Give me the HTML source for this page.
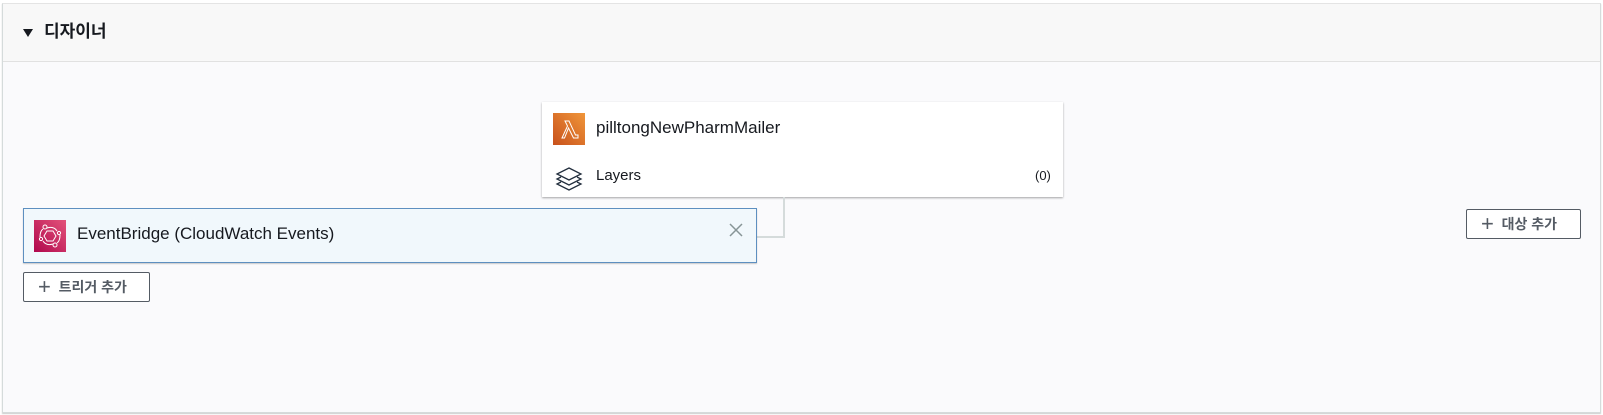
<!DOCTYPE html>
<html><head><meta charset="utf-8"><style>
*{box-sizing:border-box;margin:0;padding:0}
body{width:1603px;height:415px;background:#fff;font-family:"Liberation Sans","Noto Sans CJK KR",sans-serif;color:#16191f;position:relative;overflow:hidden}
.panel{position:absolute;left:2px;top:3px;width:1599px;height:410px;border:1px solid #d5dbdb;border-top-color:#e4e4e4;background:#fafafc;box-shadow:0 1px 1px rgba(0,0,0,.2)}
.hdr{position:absolute;left:0;top:0;right:0;height:58px;background:#f8f8f8;border-bottom:1px solid #e1e1e1}
.tri{position:absolute;left:20px;top:25px;width:0;height:0;border-left:5.5px solid transparent;border-right:5.5px solid transparent;border-top:8px solid #16191f}
.ttl{position:absolute;left:41px;top:17px;font-size:17px;font-weight:bold;line-height:22px}
.abs{position:absolute}
.card{left:539px;top:98px;width:521px;height:95px;background:#fff;box-shadow:0 1px 2px rgba(0,0,0,.35)}
.eb{left:20px;top:204px;width:734px;height:55px;background:#f1f8fc;border:1px solid #5d8fc0;box-shadow:0 1px 1px rgba(0,0,0,.2)}
.btn{background:#fff;border:1px solid #545b64;border-radius:2px;font-size:14px;font-weight:bold;color:#545b64;line-height:28px}
</style></head><body>
<div class="panel">
 <div class="hdr"><div class="tri"></div><div class="ttl">디자이너</div></div>
 <div class="abs card">
  <svg class="abs" style="left:11px;top:11px" width="32" height="32" viewBox="0 0 32 32"><defs><linearGradient id="g" x1="0" y1="1" x2="1" y2="0"><stop offset="0" stop-color="#c8511b"/><stop offset="1" stop-color="#f0963a"/></linearGradient></defs><rect width="32" height="32" fill="url(#g)"/><path d="M9 25 L14.5 13 L12 8 H16 L22.5 22 H25 V25 H20.5 L15.5 15 L11.5 25 Z" fill="none" stroke="#fff" stroke-width="1"/></svg>
  <div class="abs" style="left:54px;top:15px;font-size:17px;line-height:22px">pilltongNewPharmMailer</div>
  <svg class="abs" style="left:13px;top:64px" width="28" height="26" viewBox="0 0 28 26"><g fill="none" stroke="#232f3e" stroke-width="1.3"><path d="M14 2 L26 8 L14 14 L2 8 Z"/><path d="M6 11 L2 13 L14 19 L26 13 L22 11"/><path d="M6 16 L2 18 L14 24 L26 18 L22 16"/></g></svg>
  <div class="abs" style="left:54px;top:64px;font-size:15px;line-height:20px">Layers</div>
  <div class="abs" style="left:493px;top:65px;font-size:13px;line-height:18px">(0)</div>
 </div>
 <div class="abs" style="left:780px;top:193px;width:2px;height:41px;background:#d5dbdb"></div>
 <div class="abs" style="left:752px;top:232px;width:30px;height:2px;background:#d5dbdb"></div>
 <div class="abs eb">
  <svg class="abs" style="left:10px;top:11px" width="32" height="32" viewBox="0 0 32 32"><defs><linearGradient id="p" x1="0" y1="1" x2="1" y2="0"><stop offset="0" stop-color="#b0084d"/><stop offset="1" stop-color="#e3527a"/></linearGradient></defs><rect width="32" height="32" fill="url(#p)"/><g fill="none" stroke="#fff" stroke-width="1"><path d="M13 11 H19 L22 16 L19 21 H13 L10 16 Z"/><circle cx="11" cy="7" r="2"/><circle cx="21" cy="25" r="2"/><circle cx="25" cy="13" r="1.6"/><circle cx="7" cy="19" r="1.6"/><path d="M13 8 Q20 6 23 11 M19 24 Q12 26 9 21 M6 17 Q6 11 9 9 M26 15 Q26 21 23 23"/></g></svg>
  <div class="abs" style="left:53px;top:14px;font-size:17px;line-height:22px">EventBridge (CloudWatch Events)</div>
  <svg class="abs" style="left:705px;top:14px" width="14" height="14" viewBox="0 0 14 14"><path d="M1 1 L13 13 M13 1 L1 13" stroke="#879596" stroke-width="1.5"/></svg>
 </div>
 <div class="abs btn" style="left:20px;top:268px;width:127px;height:30px;padding-left:14px"><span style="font-size:22px;font-weight:normal;vertical-align:-2px">+</span>&nbsp; 트리거 추가</div>
 <div class="abs btn" style="left:1463px;top:205px;width:115px;height:30px;padding-left:14px"><span style="font-size:22px;font-weight:normal;vertical-align:-2px">+</span>&nbsp; 대상 추가</div>
</div>
</body></html>
